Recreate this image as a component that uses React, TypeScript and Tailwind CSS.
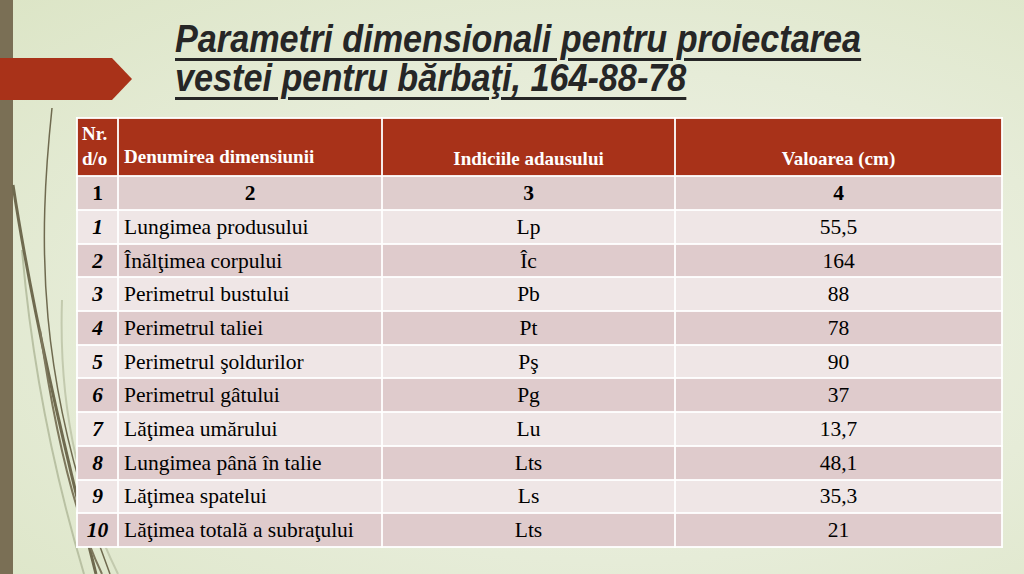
import React from 'react';

const rows: [string, string, string, string][] = [
  ['1', 'Lungimea produsului', 'Lp', '55,5'],
  ['2', 'Înălţimea corpului', 'Îc', '164'],
  ['3', 'Perimetrul bustului', 'Pb', '88'],
  ['4', 'Perimetrul taliei', 'Pt', '78'],
  ['5', 'Perimetrul şoldurilor', 'Pş', '90'],
  ['6', 'Perimetrul gâtului', 'Pg', '37'],
  ['7', 'Lăţimea umărului', 'Lu', '13,7'],
  ['8', 'Lungimea până în talie', 'Lts', '48,1'],
  ['9', 'Lăţimea spatelui', 'Ls', '35,3'],
  ['10', 'Lăţimea totală a subraţului', 'Lts', '21'],
];

function Decor() {
  return (
    <svg className="absolute left-0 top-0 pointer-events-none" width="200" height="574" viewBox="0 0 200 574">
      <path d="M22,250 C34,390 62,500 84,574" stroke="#b9c1a3" strokeWidth="2" fill="none" />
      <path d="M62,300 C58,420 84,505 118,574" stroke="#c3caae" strokeWidth="2" fill="none" />
      <path d="M13,185 C32,310 62,440 96,574" stroke="#6f6a4f" strokeWidth="3" fill="none" />
      <path d="M52,108 C38,240 36,380 110,574" stroke="#6f6a4f" strokeWidth="1.5" fill="none" />
      <path d="M40,330 C56,440 76,520 102,574" stroke="#7d775c" strokeWidth="2" fill="none" />
    </svg>
  );
}

export default function App() {
  return (
    <div
      className="relative w-[1024px] h-[574px] overflow-hidden bg-[radial-gradient(ellipse_at_60%_55%,#f1f4e8_0%,#e6ecd8_55%,#dce5c6_100%)]"
      style={{ fontFamily: '"Liberation Serif", "Times New Roman", serif' }}
    >
      <div className="absolute left-0 top-0 h-full w-[13px] bg-[#7a6f55]" />
      <Decor />

      <div className="flex flex-row items-start">
        <div className="mt-[58px] h-[42px] w-[132px] shrink-0 bg-[#a93219] [clip-path:polygon(0_0,112px_0,132px_50%,112px_100%,0_100%)]" />
        <h1
          className="ml-[43px] mt-[20px] origin-top-left scale-x-[0.9] whitespace-nowrap text-[#262626] text-[38px] leading-[39px] font-bold italic underline decoration-[3px] underline-offset-[6px]"
          style={{ fontFamily: '"Liberation Sans", Arial, sans-serif' }}
        >
          Parametri dimensionali pentru proiectarea
          <br />
          vestei pentru bărbaţi, 164-88-78
        </h1>
      </div>

      <div className="relative ml-[76px] mt-[17px] w-[925px]">
        <table className="w-full border-collapse table-fixed">
          <colgroup>
            <col className="w-[41px]" />
            <col className="w-[264px]" />
            <col className="w-[293px]" />
            <col className="w-[327px]" />
          </colgroup>
          <thead>
            <tr className="h-[58px] bg-[#a83219] text-white font-bold text-[19px] leading-[25px]">
              <th className="border-2 border-white/90 px-[4px] align-top text-left font-bold pt-[2px]">
                Nr.
                <br />
                d/o
              </th>
              <th className="border-2 border-white/90 px-[5px] align-bottom text-left font-bold pb-[6px]">
                Denumirea dimensiunii
              </th>
              <th className="border-2 border-white/90 px-[5px] align-bottom text-center font-bold pb-[4px]">
                Indiciile adausului
              </th>
              <th className="border-2 border-white/90 px-[5px] align-bottom text-center font-bold pb-[4px]">
                Valoarea (cm)
              </th>
            </tr>
          </thead>
          <tbody className="text-[21.5px] leading-[28px] text-black">
            <tr className="h-[34px] bg-[#dfcdcd] font-bold">
              <td className="border-2 border-white/90 text-center">1</td>
              <td className="border-2 border-white/90 text-center">2</td>
              <td className="border-2 border-white/90 text-center">3</td>
              <td className="border-2 border-white/90 text-center">4</td>
            </tr>
            {rows.map((r, i) => (
              <tr key={i} className={`h-[33.7px] ${i % 2 === 0 ? 'bg-[#efe6e6]' : 'bg-[#dfcbcc]'}`}>
                <td className="border-2 border-white/90 text-center font-bold italic">{r[0]}</td>
                <td className="border-2 border-white/90 px-[5px] text-left whitespace-nowrap">{r[1]}</td>
                <td className="border-2 border-white/90 text-center">{r[2]}</td>
                <td className="border-2 border-white/90 text-center">{r[3]}</td>
              </tr>
            ))}
          </tbody>
        </table>
      </div>
    </div>
  );
}
